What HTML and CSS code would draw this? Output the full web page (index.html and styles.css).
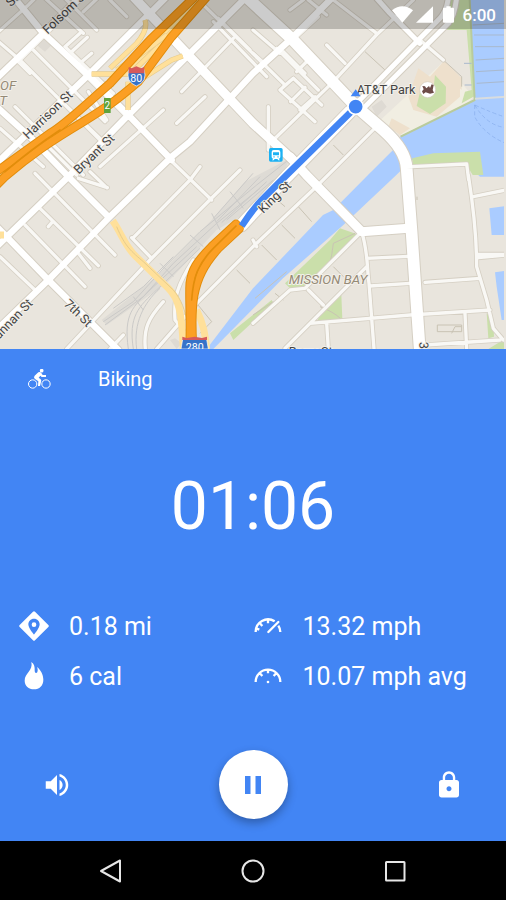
FILE: index.html
```html
<!DOCTYPE html>
<html lang="en">
<head>
<meta charset="utf-8">
<meta name="viewport" content="width=device-width, initial-scale=1">
<title>Biking</title>
<link rel="stylesheet" href="styles.css">
</head>
<body>
<main class="app">
  <section class="map" aria-label="Route map">
    <svg class="map-canvas" viewBox="0 0 1518 1047" preserveAspectRatio="xMidYMid slice">
      <defs>
        <!-- Minor streets -->
        <g id="minor">
          <path d="M-10 100L85 15L110 -10M60 180L240 0M50 180L90 220M-10 120L60 180L170 290L310 430M130 -10L250 100M190 -10L290 90M250 35L340 -50M330 0L380 50M195 140L240 100M215 155L262 112M195 140L340 280M240 190L275 160M265 275L320 360M165 285L310 425M185 155L385 355M100 150L315 365M45 320L250 525M0 385L130 500M130 425L230 525M300 500L490 330M530 370L615 290M545 275L700 115M595 0L850 250M655 55L750 150M570 420L610 380M640 65L800 230M0 770L105 870M75 675L255 860M120 625L295 797M145 680L158 665M105 520L345 765M235 760L270 805M235 535L322 563M320 563L270 515M200 1047L450 780L632 597L720 510M480 450L635 600M400 713L570 540L600 500M395 713L455 775M580 780C535 850 520 890 525 960L550 990M490 905C445 955 430 985 436 1047M330 1047L370 1005"/>
          <path d="M759 90L840 160M759 160L792 190M820 420L1000 245L1129 105L1240 0M805 320V450M980 135L1035 190M830 145L955 270M915 220L850 155M840 270L880 235L965 315M840 270L945 365M880 235L850 260M872 305L915 262M900 330L945 290M890 215L925 180M890 110L955 50M1000 0L1130 100M870 30L910 0M925 0L980 45M1260 120L1330 180M1124 385L944 565L759 740L590 910L470 1047M1085 695L915 865L870 870L759 970M925 870L970 915M1100 800L855 1045M1085 695C1105 760 1100 800 1107 850L1122 1047M1100 775L1225 769M1110 858L1230 850M930 970L1230 945L1470 930M980 970L985 1047M1275 847L1440 835M1275 1035L1500 1020M1395 940L1400 1047M1405 525C1420 620 1430 720 1430 800L1460 900L1480 985L1510 1020M1420 590L1518 570M1435 763H1518M1435 773L1518 765M1235 500L1400 492L1406 540M759 720L770 740"/>
        </g>
        <!-- City streets -->
        <g id="streets">
          <path d="M40 -10L130 100L265 225L385 345L515 480M-10 320L100 420L205 530L325 650M-10 680L20 710L145 840L355 1050M-10 235L130 100L250 -20M-10 490L265 225L500 -10M-10 740L205 530L385 345L560 170L740 -10M-10 990L145 840L325 655L515 470L570 425L759 220L875 115L1010 -20"/>
        </g>
        <g id="avenues">
          <path d="M400 -10L560 160L759 370L879 480"/>
          <path d="M870 470L919 525L1085 695L1225 685"/>
        </g>
        <path id="boulevard" d="M740 -8L879 120L1069 320L1150 390C1195 430 1218 465 1220 505L1235 700L1260 1060"/>
        <path id="king" d="M1050 335L860 530L725 675"/>
        <g id="king-lanes"><path d="M1050 330L1235 140L1320 55Q1342 30 1345 -10M1080 335L1260 155L1345 70Q1365 45 1370 -10M1259 130L1170 40L1130 -5"/></g>
        <g id="ramps"><path d="M275 222H390L475 140M435 60Q445 90 410 130L330 205M384 330V245M420 240L515 180L548 168M500 110L575 40L610 0M350 210L440 150L500 105"/></g>
        <g id="freeway">
          <path d="M590 -15L450 120L330 250C250 320 200 370 150 400L-20 522"/>
          <path d="M625 -15L515 110L415 245C345 305 315 325 250 365C150 425 90 465 15 530L-25 570"/>
        </g>
        <g id="freeway-south">
          <path d="M708 672L635 740C590 785 575 810 570 850C567 890 572 930 570 1030"/>
          <path d="M718 686L655 745C610 795 592 835 582 885C576 920 575 980 578 1030"/>
        </g>
      </defs>

      <rect class="land" width="1518" height="1047"/>
      <path class="parcel" d="M110 135L135 115L155 135L135 155ZM510 1020L525 1015L545 1030L530 1047ZM1115 320L1145 300L1160 320L1130 350Z"/>

      <path class="stadium" d="M1125 375L1330 185L1420 290L1385 330L1205 405Z"/>
      <path class="stand" d="M1225 290L1255 205L1290 230L1330 185L1380 250V290L1310 350L1240 330ZM1175 355L1230 385L1200 405L1165 380ZM1330 180L1385 235V270L1345 230Z"/>
      <path class="park" d="M1345 0H1410L1430 285L1385 310L1395 275L1415 270L1400 90H1335ZM1265 255L1300 270L1305 225L1338 260L1337 310L1290 342L1250 318Z"/>

      <!-- Channel and bay -->
      <path class="water" d="M620 1047L759 865L969 645L1000 630L1104 525L1189 440L1202 408L1424 300L1409 0H1518V530H1440L1380 470L1235 480L1189 525L1030 675L849 835L640 1047Z"/>
      <path class="water" d="M1468 625L1518 618V705H1475ZM1485 817L1518 812V960H1505L1490 860Z"/>
      <path class="park" d="M1237 475L1300 460L1440 455L1450 525H1418L1400 495L1237 505ZM1020 685L1078 705L920 865L875 870L855 850L990 720ZM960 945L1024 885L1027 957L950 967ZM690 1000L815 900L820 910L759 965L700 1020ZM1460 940L1480 960L1482 1010L1465 1015ZM1465 1047L1518 1015V1047Z"/>
      <path class="shore" d="M1202 410L1424 300L1409 0"/>
      <path class="shade" d="M1425 296L1518 290"/>
      <path class="pier" d="M1418 75L1512 70M1422 105H1512M1425 140H1512M1427 180L1512 175M1428 215L1512 210M1430 250L1512 245M1392 190H1415M1394 255H1415"/>
      <path class="ferry" d="M1424 315V350Q1450 400 1512 428M1424 315Q1460 375 1512 382M1424 315Q1480 340 1512 350"/>
      <path class="detail" d="M1095 155L1155 210M1000 435L1030 465M820 590L855 620M895 620L935 665M845 675L885 715M785 735L830 780M710 810L750 850M590 910L635 965L600 1000M1330 180L1385 230V260M1312 975H1385V995H1312ZM1355 1000L1365 980H1385M930 855C1000 770 990 800 1000 730L1065 700M765 895L860 815M825 880L850 900M1000 800L1030 830M1251 590V600M759 945L820 905M960 920Q1000 935 1023 957"/>

      <!-- Rail yard -->
      <g class="yard">
        <path d="M735 545L870 475L815 595L650 690L500 850L320 975L305 960L480 820L640 655Z"/>
      </g>
      <g class="rails">
        <path d="M310 965L400 905L500 795L600 695L770 555L865 480M315 975L430 890L520 790L650 670L780 565M640 655L759 520M650 665L780 530M665 668L800 545M680 660L820 540M385 1047C370 940 400 920 450 870L590 740M400 1047C385 950 415 920 470 870L600 745M410 1047C400 970 430 910 480 865M340 925L430 860L520 770M480 790L520 830M400 890L430 930M570 705L610 740M635 640L660 690M690 575L730 625"/>
      </g>

      <use href="#minor" class="edge minor"/>
      <use href="#streets" class="edge streets"/>
      <use href="#avenues" class="edge avenues"/>
      <use href="#boulevard" class="edge boulevard"/>
      <use href="#king" class="edge king"/>
      <use href="#king-lanes" class="edge lanes"/>
      <use href="#minor" class="fill minor"/>
      <use href="#streets" class="fill streets"/>
      <use href="#avenues" class="fill avenues"/>
      <use href="#boulevard" class="fill boulevard"/>
      <use href="#king" class="fill king"/>
      <use href="#king-lanes" class="fill lanes"/>

      <path class="ramp-area" d="M365 215L595 0H625L515 115L425 200L390 235Z"/>
      <use href="#ramps" class="ramp-edge"/>
      <use href="#ramps" class="ramp"/>
      <path class="ramp-wide" d="M338 662C365 700 375 740 410 772L505 865C535 895 545 930 550 1047M590 930C610 970 615 1000 620 1047M-5 705H12"/>
      <path class="ramp-line" d="M350 680C375 740 395 755 430 785L520 870C545 900 555 930 562 970"/>

      <use href="#freeway" class="freeway-edge"/>
      <use href="#freeway" class="freeway"/>
      <path class="freeway-line" d="M15 515C80 460 120 430 180 390"/>
      <use href="#freeway-south" class="freeway-edge"/>
      <use href="#freeway-south" class="freeway"/>
      <path class="freeway-line" d="M708 678L640 745C595 790 580 830 575 900"/>

      <path class="route" d="M1069 320L860 525L785 600Q755 632 725 678"/>

      <!-- Highway shields -->
      <path class="shield" d="M387 208Q410 218 432 208Q444 245 409 258Q375 245 387 208Z"/>
      <path class="shield-top" d="M386 220V201L395 205L409 199L423 205L433 201V220Z"/>
      <text class="shield-text" x="409" y="245">80</text>
      <path class="shield" d="M548 1018H620L625 1047H543Z"/>
      <path class="shield-top" d="M547 1020V1010L560 1014L584 1010L606 1014L621 1010V1020Z"/>
      <text class="shield-text" x="584" y="1054">280</text>
      <rect class="exit" x="312" y="294" width="20" height="45"/>
      <text class="exit-text" x="322" y="328">2</text>

      <!-- Station marker -->
      <rect class="station" x="807" y="444" width="41" height="41" rx="5"/>
      <path class="station-train" fill-rule="evenodd" d="M821 450H835Q841 450 841 456V471Q841 476 836 476L840 481H835L832 477H824L821 481H816L820 476Q815 476 815 471V456Q815 450 821 450ZM819 457V466H837V457ZM822 469a2 2 0 1 0 .1 0ZM834 469a2 2 0 1 0 .1 0Z"/>

      <g class="label">
        <text transform="translate(33 22) rotate(-45)">St</text>
        <text transform="translate(143 104) rotate(-44)">Folsom St</text>
        <text transform="translate(84 419) rotate(-44)">Harrison St</text>
        <text transform="translate(236 524) rotate(-44)">Bryant St</text>
        <text class="label-end" transform="translate(100 912) rotate(-46)">Brannan St</text>
        <text transform="translate(190 914) rotate(44)">7th St</text>
        <text transform="translate(790 642) rotate(-44)">King St</text>
        <text transform="translate(1258 1026) rotate(88)">3rd St</text>
        <text x="1070" y="283">AT&amp;T Park</text>
        <text x="866" y="1069">Berry St</text>
      </g>
      <g class="area-label">
        <text x="866" y="851">MISSION BAY</text>
        <text x="0" y="269">OF</text>
        <text x="-25" y="316">ET</text>
      </g>

      <circle class="poi" cx="1283" cy="269" r="24"/>
      <path class="poi-icon" d="M1267 258L1275 259L1279 265L1287 258L1290 264L1295 253L1301 255L1298 270L1302 278L1290 281L1277 277L1270 282L1266 274L1271 268Z"/>

      <path class="heading" d="M1052 289L1067 268L1082 289Z"/>
      <circle class="position" cx="1067" cy="320" r="23"/>
      <rect class="land" x="1512" width="6" height="1047"/>
    </svg>

    <div class="status-bar">
      <svg class="wifi" viewBox="0 0 63 50" aria-label="Wi-Fi"><path d="M31 50L0 12Q31 -12 63 12Z"/></svg>
      <svg class="signal" viewBox="0 0 52 50" aria-label="Signal"><path d="M0 50L52 0V50Z"/></svg>
      <svg class="battery" viewBox="0 0 33 50" aria-label="Battery"><path d="M3 5H10V0H23V5H30Q33 5 33 8V47Q33 50 30 50H3Q0 50 0 47V8Q0 5 3 5Z"/></svg>
      <time>6:00</time>
    </div>
  </section>

  <section class="panel">
    <header class="activity">
      <svg class="bike" viewBox="0 0 69 60" aria-hidden="true">
        <g class="wheels"><circle cx="14" cy="45" r="12.500"/><circle cx="54" cy="45" r="12.500"/></g>
        <circle cx="41" cy="5" r="5.500"/>
        <path d="M20 20L31 10Q36 7 40 12L44 18H54V24H41L37 20L32 26L38 31Q41 34 39 39L36 51H30L31 37L20 29Q16 25 20 20Z"/>
      </svg>
      <h1>Biking</h1>
    </header>

    <div class="timer" role="timer">01:06</div>

    <ul class="stats">
      <li>
        <svg class="stat-icon" viewBox="0 0 90 90" aria-hidden="true"><path fill-rule="evenodd" d="M42 2Q45 -1 48 2L88 42Q91 45 88 48L48 88Q45 91 42 88L2 48Q-1 45 2 42ZM45 23C35 23 28 31 28 40C28 52 45 71 45 71S62 52 62 40C62 31 55 23 45 23ZM45 34A7 7 0 1 1 45 48A7 7 0 0 1 45 34Z"/></svg>
        <span>0.18 mi</span>
      </li>
      <li>
        <svg class="stat-icon" viewBox="0 0 90 90" aria-hidden="true">
          <g class="gauge"><path d="M8 63A37 37 0 0 1 65 31M76 44Q82 53 82 63M20 36L28 45M45 26V37M11 53L19 56"/><path class="needle" d="M46 63L76 33"/></g>
        </svg>
        <span>13.32 mph</span>
      </li>
      <li>
        <svg class="stat-icon" viewBox="0 0 90 90" aria-hidden="true"><path d="M37 3C54 14 42 34 51 36C56 37 58 25 54 18C65 26 73 42 73 56C73 74 61 85 45 85C29 85 17 74 17 59C17 36 43 29 37 3Z"/></svg>
        <span>6 cal</span>
      </li>
      <li>
        <svg class="stat-icon" viewBox="0 0 90 90" aria-hidden="true">
          <g class="gauge"><path d="M8 63A37 37 0 0 1 82 63M20 36L28 45M45 26V37M70 36L62 45"/></g>
          <circle cx="45" cy="63" r="4"/>
        </svg>
        <span>10.07 mph avg</span>
      </li>
    </ul>

    <div class="controls">
      <button class="icon-button" type="button" aria-label="Sound">
        <svg viewBox="0 0 24 24"><path d="M3 9v6h4l5 5V4L7 9H3zm13.500 3c0-1.770-1.020-3.290-2.500-4.030v8.050c1.480-.730 2.500-2.250 2.500-4.020zM14 3.230v2.060c2.890.860 5 3.540 5 6.710s-2.110 5.850-5 6.710v2.060c4.010-.910 7-4.490 7-8.770s-2.990-7.860-7-8.770z"/></svg>
      </button>
      <button class="pause" type="button" aria-label="Pause">
        <svg viewBox="0 0 16 18"><path d="M0 0H5.500V18H0ZM10.500 0H16V18H10.500Z"/></svg>
      </button>
      <button class="icon-button" type="button" aria-label="Lock">
        <svg viewBox="0 0 24 24"><path d="M18 8h-1V6c0-2.760-2.240-5-5-5S7 3.240 7 6v2H6c-1.100 0-2 .9-2 2v10c0 1.100.9 2 2 2h12c1.100 0 2-.9 2-2V10c0-1.100-.9-2-2-2zm-6 9c-1.100 0-2-.9-2-2s.9-2 2-2 2 .9 2 2-.9 2-2 2zm3.100-9H8.900V6c0-1.710 1.390-3.100 3.100-3.100 1.710 0 3.100 1.390 3.100 3.100v2z"/></svg>
      </button>
    </div>
  </section>

  <nav class="nav-bar" aria-label="System">
    <button type="button" aria-label="Back"><svg viewBox="0 0 24 24"><path d="M21 1.500V22.500L2 12Z"/></svg></button>
    <button type="button" aria-label="Home"><svg viewBox="0 0 24 24"><circle cx="12" cy="12" r="10.500"/></svg></button>
    <button type="button" aria-label="Recents"><svg viewBox="0 0 24 24"><rect x="3" y="3" width="18.500" height="18.500" rx="0.500"/></svg></button>
  </nav>
</main>
</body>
</html>
```

FILE: styles.css
```css
* {
  box-sizing: border-box;
}

body {
  margin: 0;
  font-family: Roboto, "Liberation Sans", sans-serif;
  color: #fff;
}

.app {
  display: flex;
  flex-direction: column;
  min-height: 100vh;
}

svg {
  display: block;
  fill: currentColor;
}

button {
  display: flex;
  align-items: center;
  justify-content: center;
  padding: 0;
  border: 0;
  background: none;
  color: inherit;
  cursor: pointer;
}

/* Map */

.map {
  position: relative;
  flex: 1;
  min-height: 240px;
  overflow: hidden;
}

.map-canvas {
  position: absolute;
  inset: 0;
  width: 100%;
  height: 100%;
}

.map-canvas path,
.map-canvas use {
  stroke-linejoin: round;
}

.land { fill: #e9e5dd; }
.parcel { fill: #dedad3; }
.stadium { fill: #f1eee2; }
.stand { fill: #eee0cc; }
.park { fill: #cadfaa; }
.water { fill: #aaccff; }
.yard { fill: #dedbd5; }

.shore,
.shade,
.pier,
.ferry,
.detail,
.rails {
  fill: none;
}

.shore { stroke: #b9cb9c; stroke-width: 6; }
.shade { stroke: #d8dcdf; stroke-width: 6; }
.pier { stroke: #a9b9cd; stroke-width: 3; }
.ferry { stroke: #86aceb; stroke-width: 2; stroke-dasharray: 12 7; }
.detail { stroke: #c9c3b4; stroke-width: 3; }
.rails { stroke: #cbcac8; stroke-width: 3; }

.edge,
.fill {
  fill: none;
  stroke-linecap: round;
}

.edge { stroke: #d5cfc3; }
.fill { stroke: #fff; }

.edge.minor { stroke-width: 15; }
.edge.streets { stroke-width: 25; }
.edge.avenues { stroke-width: 33; }
.edge.boulevard { stroke-width: 41; }
.edge.king { stroke-width: 43; }
.edge.lanes { stroke-width: 21; }

.fill.minor { stroke: #f9f8f5; stroke-width: 10; }
.fill.streets { stroke-width: 19; }
.fill.avenues { stroke-width: 27; }
.fill.boulevard { stroke-width: 35; }
.fill.king { stroke-width: 37; }
.fill.lanes { stroke-width: 15; }

.ramp-area { fill: #fde29f; }
.ramp-edge { fill: none; stroke: #e7cb8c; stroke-width: 16; }
.ramp { fill: none; stroke: #ffe09a; stroke-width: 12; }
.ramp-wide { fill: none; stroke: #ffe09a; stroke-width: 21; }
.ramp-line { fill: none; stroke: #e6cc8d; stroke-width: 3; }

.freeway-edge,
.freeway,
.freeway-line {
  fill: none;
  stroke-linecap: round;
}

.freeway-edge { stroke: #e28d0b; stroke-width: 27; }
.freeway { stroke: #fb9f24; stroke-width: 21; }
.freeway-line { stroke: #e28d0b; stroke-width: 5; }

.route { fill: none; stroke: #4285f4; stroke-width: 20; }
.heading { fill: #4285f4; }
.position { fill: #4285f4; stroke: #fff; stroke-width: 5; }

.shield { fill: #3673c9; stroke: #fff; stroke-width: 2; }
.shield-top { fill: #d65a5b; }
.shield-text { fill: #fff; font-size: 32px; text-anchor: middle; }
.exit { fill: #60a33c; }
.exit-text { fill: #fff; font-size: 30px; text-anchor: middle; }
.station { fill: #1cb1f3; }
.station-train { fill: #fff; }
.poi { fill: #fff; stroke: #d3cbbd; stroke-width: 2; }
.poi-icon { fill: #6d4c48; }

.label,
.area-label {
  font-size: 38px;
  paint-order: stroke;
  stroke: #f3f0ea;
  stroke-width: 6px;
  stroke-linejoin: round;
}

.label { fill: #444; }
.label-end { text-anchor: end; }

.area-label {
  fill: #958a76;
  font-size: 40px;
  font-style: italic;
}

/* Status bar */

.status-bar {
  position: absolute;
  inset: 0 0 auto;
  display: flex;
  align-items: center;
  justify-content: flex-end;
  height: 29px;
  padding-right: 10px;
  background: rgba(0, 0, 0, 0.2);
  font-size: 17px;
  font-weight: 500;
}

.wifi { width: 21px; height: 17px; }
.signal { width: 17px; height: 17px; margin-left: 3px; }
.battery { width: 11px; height: 17px; margin: 0 9px 0 10px; }

/* Workout panel */

.panel {
  background: #4285f4;
}

.activity {
  display: flex;
  align-items: center;
  gap: 47px;
  height: 60px;
  padding: 0 28px;
}

.activity h1 {
  margin: 0;
  font-size: 20px;
  font-weight: 400;
}

.bike { width: 23px; height: 20px; }
.wheels { fill: none; stroke: currentColor; stroke-width: 3; }

.timer {
  padding: 58px 0 54px;
  font-size: 66px;
  line-height: 80px;
  text-align: center;
}

.stats {
  display: grid;
  grid-template-columns: 1fr 1fr;
  margin: 0;
  padding: 0 20px 0 19px;
  list-style: none;
  font-size: 25px;
}

.stats li {
  display: flex;
  align-items: center;
  gap: 20px;
  height: 50px;
  white-space: nowrap;
}

.stat-icon { width: 30px; height: 30px; }
.gauge { fill: none; stroke: currentColor; stroke-width: 7; }
.needle { stroke-linecap: round; }

.controls {
  display: flex;
  align-items: center;
  justify-content: space-between;
  padding: 49px 40px 22px;
}

.icon-button { width: 34px; height: 34px; }
.icon-button svg { width: 30px; height: 30px; }

.pause {
  width: 69px;
  height: 69px;
  border-radius: 50%;
  background: #fff;
  color: #4285f4;
  box-shadow: 0 4px 10px rgba(0, 0, 0, 0.3);
}

.pause svg { width: 16px; height: 18px; }

/* Navigation bar */

.nav-bar {
  display: flex;
  align-items: center;
  justify-content: center;
  gap: 94px;
  height: 59px;
  background: #000;
}

.nav-bar button { width: 48px; height: 48px; }

.nav-bar svg {
  width: 24px;
  height: 24px;
  fill: none;
  stroke: #e6e6e6;
  stroke-width: 2;
  stroke-linejoin: round;
}
```
